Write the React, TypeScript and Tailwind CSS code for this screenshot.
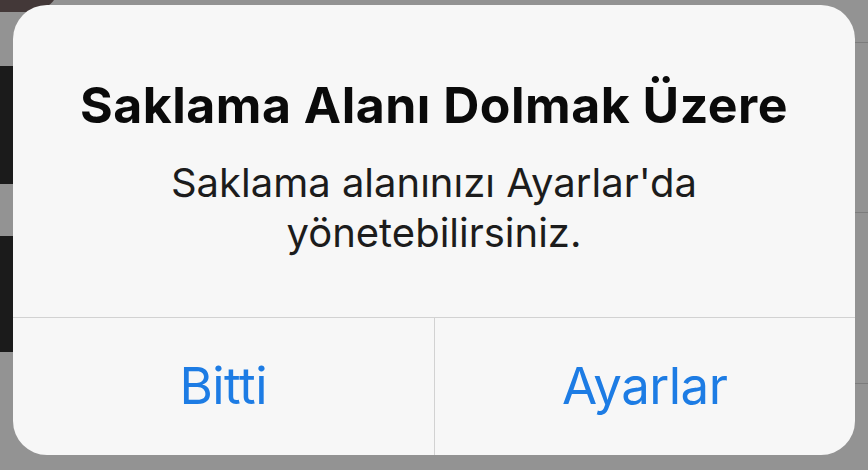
import React from "react";

export default function App() {
  return (
    <div className="relative h-[470px] w-[868px] overflow-hidden bg-[#939393]">
      {/* content peeking out behind the alert */}
      <div className="absolute left-0 top-[-20px] h-[32px] w-[60px] rounded-br-[30px] bg-[#433838]" />
      <div className="absolute left-0 top-[66px] h-[118px] w-[14px] bg-[#1b1b1b]" />
      <div className="absolute left-0 top-[236px] h-[116px] w-[14px] bg-[#1b1b1b]" />
      <div className="absolute right-0 top-[42px] h-px w-[14px] bg-[#7c7c7c]" />
      <div className="absolute right-0 top-[212px] h-px w-[14px] bg-[#7c7c7c]" />
      <div className="absolute right-0 top-[383px] h-px w-[14px] bg-[#7c7c7c]" />

      <div className="relative ml-[13px] mt-[5px] flex h-[450px] w-[842px] flex-col overflow-hidden rounded-[34px] bg-[#f7f7f7] font-['Inter',sans-serif]">
        <div className="flex h-[312px] flex-col items-center pt-[70px] text-center">
          <h1 className="text-[50px] leading-[60px] font-bold tracking-[0.01em] text-[#0a0a0a]">
            Saklama Alanı Dolmak Üzere
          </h1>
          <p className="mt-[23px] text-[40px] leading-[50px] text-[#1c1c1c]">
            Saklama alanınızı Ayarlar'da
            <br />
            yönetebilirsiniz.
          </p>
        </div>
        <div className="h-px bg-[#d2d2d2]" />
        <div className="flex flex-1">
          <button className="flex flex-1 items-center justify-center text-[51px] tracking-[-0.01em] text-[#1d7ce4]">
            Bitti
          </button>
          <div className="w-px bg-[#d2d2d2]" />
          <button className="flex flex-1 items-center justify-center text-[51px] tracking-[-0.01em] text-[#1d7ce4]">
            Ayarlar
          </button>
        </div>
      </div>
    </div>
  );
}
